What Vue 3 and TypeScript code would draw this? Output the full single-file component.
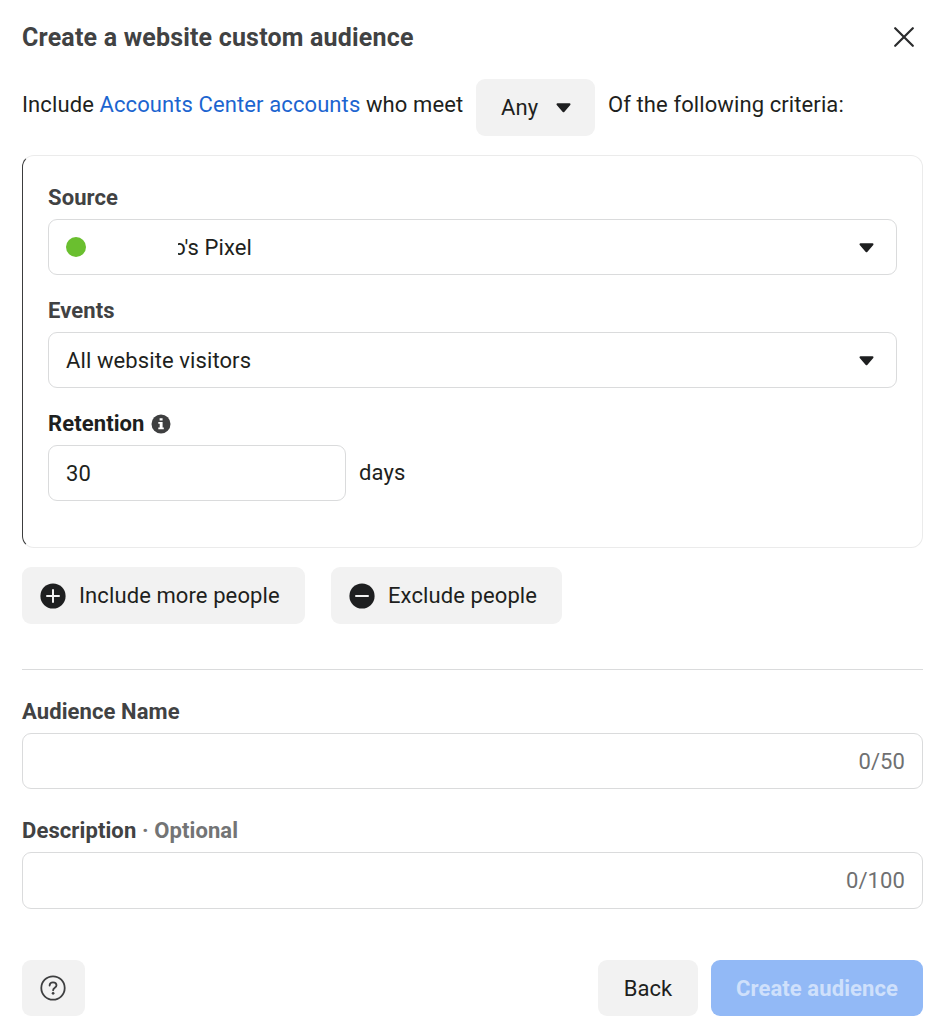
<script setup lang="ts">
import { ref } from 'vue'

const retention = ref('30')
const audienceName = ref('')
const description = ref('')
</script>

<template>
  <main class="dialog">
    <header class="head">
      <h1 class="title">Create a website custom audience</h1>
      <svg class="close" viewBox="0 0 20 20" aria-label="Close">
        <path d="M1.2 1.2 18.8 18.8M18.8 1.2 1.2 18.8" />
      </svg>
    </header>

    <div class="criteria">
      <p class="lead">Include <a class="link">Accounts Center accounts</a> who meet</p>
      <button class="btn any">
        <span>Any</span>
        <svg class="caret" viewBox="0 0 15 10"><path d="M1.5 1.3H13.5L7.5 8.3Z" /></svg>
      </button>
      <p class="tail">Of the following criteria:</p>
    </div>

    <section class="card">
      <label class="label">Source</label>
      <div class="field">
        <span class="dot"></span>
        <span class="pixel"><span class="pixel-name">o's Pixel</span></span>
        <svg class="caret end" viewBox="0 0 15 10"><path d="M1.5 1.3H13.5L7.5 8.3Z" /></svg>
      </div>
      <label class="label events">Events</label>
      <div class="field">
        <span class="value">All website visitors</span>
        <svg class="caret end" viewBox="0 0 15 10"><path d="M1.5 1.3H13.5L7.5 8.3Z" /></svg>
      </div>
      <label class="label retention">
        <span>Retention</span>
        <svg class="info" viewBox="0 0 20 20">
          <circle cx="10" cy="10" r="9.5" />
          <path d="M8.6 4.2h3v2.4h-3zM7.3 8h4.3v5.6h1.2v1.7H7.3v-1.7h1.4V9.7H7.3z" />
        </svg>
      </label>
      <div class="days-row">
        <div class="field days-field"><span class="value">{{ retention }}</span></div>
        <span class="days">days</span>
      </div>
    </section>

    <div class="people">
      <button class="btn include">
        <svg class="round" viewBox="0 0 26 26">
          <circle cx="13" cy="13" r="12.6" />
          <path d="M7 13h12M13 7v12" />
        </svg>
        <span>Include more people</span>
      </button>
      <button class="btn exclude">
        <svg class="round" viewBox="0 0 26 26">
          <circle cx="13" cy="13" r="12.6" />
          <path d="M7 13h12" />
        </svg>
        <span>Exclude people</span>
      </button>
    </div>

    <hr class="rule" />

    <label class="label name">Audience Name</label>
    <div class="field"><span class="value count">{{ audienceName.length }}/50</span></div>

    <label class="label desc"><span>Description</span><span class="optional"> · Optional</span></label>
    <div class="field tall"><span class="count">{{ description.length }}/100</span></div>

    <footer class="foot">
      <button class="btn help">
        <svg viewBox="0 0 26 26" class="help-icon">
          <circle cx="13" cy="13" r="11.7" />
          <path d="M9.6 10.6C9.6 8.5 11 7.3 13 7.3s3.5 1.2 3.5 3c0 2.5-3.4 2.5-3.4 5" />
          <circle class="point" cx="13.1" cy="18.3" r="1.35" />
        </svg>
      </button>
      <button class="btn back"><span class="value">Back</span></button>
      <button class="btn create"><span class="value">Create audience</span></button>
    </footer>
  </main>
</template>

<style>
body {
  background: #fff;
}
</style>

<style scoped>
.dialog {
  box-sizing: border-box;
  width: 945px;
  height: 1024px;
  padding: 17px 22px 0;
  overflow: hidden;
  background: #fff;
  color: #1e1f20;
  font: 400 22px/26px Roboto, sans-serif;
  letter-spacing: 0.1px;
}
.head {
  display: flex;
  justify-content: space-between;
  align-items: center;
  height: 40px;
}
.title {
  margin: 1px 0 0;
  color: #414243;
  font-size: 25px;
  font-weight: 700;
  line-height: 40px;
  letter-spacing: 0.19px;
}
.close {
  width: 20px;
  height: 20px;
  margin-right: 9px;
  fill: none;
  stroke: #2b2c2d;
  stroke-width: 2.2;
  stroke-linecap: round;
}
.criteria {
  display: flex;
  align-items: center;
  height: 57px;
  margin-top: 22px;
}
.lead,
.tail {
  margin: 0 0 5px;
  white-space: nowrap;
}
.lead {
  width: 454px;
}
.tail {
  letter-spacing: 0.1px;
}
.link {
  color: #1c65d0;
}
.btn {
  display: flex;
  align-items: center;
  box-sizing: border-box;
  height: 57px;
  padding: 0;
  border: 0;
  border-radius: 9px;
  background: #f2f2f2;
  color: inherit;
  font: inherit;
  letter-spacing: inherit;
  white-space: nowrap;
}
.any {
  justify-content: space-between;
  width: 119px;
  margin-right: 13px;
  padding: 0 24px 0 25px;
}
.caret {
  flex: none;
  width: 15px;
  height: 10px;
  fill: #1e1f20;
  stroke: #1e1f20;
  stroke-width: 2;
  stroke-linejoin: round;
}
.end {
  margin-top: 2px;
  margin-left: auto;
  margin-right: 5px;
}
.card {
  box-sizing: border-box;
  height: 393px;
  margin-top: 19px;
  padding: 29px 25px 0;
  border: 1px solid #ebebeb;
  border-left-color: #3c3d3e;
  border-radius: 12px;
}
.label {
  display: flex;
  align-items: center;
  height: 26px;
  margin-bottom: 8px;
  color: #414243;
  font-weight: 700;
}
.field {
  display: flex;
  align-items: center;
  box-sizing: border-box;
  height: 56px;
  padding: 0 17px;
  border: 1px solid #dadbdc;
  border-radius: 9px;
}
.value {
  padding-top: 2px;
}
.dot {
  width: 20px;
  height: 20px;
  border-radius: 50%;
  background: #6abf2f;
}
.pixel {
  display: flex;
  justify-content: flex-end;
  width: 74px;
  margin-left: 92px;
  padding-top: 2px;
  overflow: hidden;
}
.pixel-name {
  flex: none;
}
.events {
  margin-top: 23px;
}
.retention {
  gap: 6px;
  margin-top: 23px;
  color: #1e1f20;
}
.info {
  width: 20px;
  height: 20px;
  fill: #3e3f40;
}
.info path {
  fill: #fff;
}
.days-row {
  display: flex;
  align-items: center;
  gap: 13px;
}
.days-field {
  width: 298px;
}
.people {
  display: flex;
  gap: 26px;
  margin-top: 19px;
}
.include,
.exclude {
  gap: 13px;
  padding-left: 18px;
}
.include {
  width: 283px;
}
.exclude {
  width: 231px;
}
.round {
  width: 26px;
  height: 26px;
  fill: #1e1f20;
}
.round path {
  stroke: #f2f2f2;
  stroke-width: 2;
  stroke-linecap: round;
}
.rule {
  height: 1px;
  margin: 45px 0 0;
  border: 0;
  background: #dadbdc;
}
.name {
  margin-top: 29px;
}
.desc {
  margin-top: 29px;
}
.optional {
  color: #737475;
  white-space: pre;
}
.count {
  margin-left: auto;
  color: #6f7071;
}
.tall {
  height: 57px;
}
.foot {
  display: flex;
  margin-top: 51px;
}
.help,
.back,
.create {
  justify-content: center;
  height: 56px;
}
.help {
  width: 63px;
  padding-right: 1px;
  margin-right: auto;
}
.help-icon {
  width: 26px;
  height: 26px;
  fill: none;
  stroke: #3e3f40;
  stroke-width: 1.8;
  stroke-linecap: round;
}
.help-icon .point {
  fill: #3e3f40;
  stroke: none;
}
.back {
  width: 100px;
  margin-right: 13px;
}
.create {
  width: 212px;
  background: #92b9f6;
  color: #cfe0fb;
  font-weight: 700;
}
</style>
